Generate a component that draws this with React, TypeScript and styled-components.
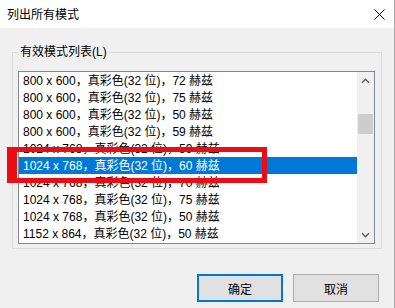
import React from "react";
import styled, { createGlobalStyle } from "styled-components";

const Global = createGlobalStyle`
  html, body { margin: 0; padding: 0; background: #f0f0f0; }
  body { font-family: "Liberation Sans", "Noto Sans CJK SC", sans-serif; }
  * { box-sizing: border-box; }
`;

const Window = styled.div`
  position: relative;
  width: 395px;
  height: 308px;
  background: #f0f0f0;
  border-right: 1px solid #a8a8a8;
  display: flex;
  flex-direction: column;
  font-size: 12px;
  color: #000;
  overflow: hidden;
`;

const TitleBar = styled.div`
  flex: none;
  height: 28px;
  background: #fff;
  display: flex;
  align-items: center;
  justify-content: space-between;
  padding-left: 7px;
`;

const Title = styled.span`
  font-size: 12px;
  line-height: 16px;
  padding-top: 1px;
`;

const CloseButton = styled.div`
  width: 30px;
  height: 28px;
  display: flex;
  align-items: center;
  justify-content: center;
`;

const Client = styled.div`
  display: flex;
  flex-direction: column;
  padding: 16px 0 0 12px;
`;

const GroupBox = styled.fieldset`
  width: 370px;
  margin: 0;
  min-width: 0;
  padding: 11px 6px 4px 5px;
  border: 1px solid #dcdcdc;
`;

const Legend = styled.legend`
  padding: 0 2px;
  font-size: 12px;
  line-height: 16px;
`;

const ListBox = styled.div`
  height: 173px;
  border: 1px solid #828790;
  background: #fff;
  display: flex;
`;

const List = styled.div`
  flex: 1;
  min-width: 0;
  overflow: hidden;
  display: flex;
  flex-direction: column;
`;

const Row = styled.div<{ $selected?: boolean }>`
  flex: none;
  height: 17px;
  line-height: 15px;
  padding: 2px 0 0 4px;
  white-space: nowrap;
  overflow: hidden;
  background: ${(p) => (p.$selected ? "#0078d7" : "transparent")};
  color: ${(p) => (p.$selected ? "#fff" : "#000")};
`;

const ScrollBar = styled.div`
  flex: none;
  width: 17px;
  background: #f0f0f0;
  display: flex;
  flex-direction: column;
`;

const ScrollArrow = styled.div`
  flex: none;
  height: 17px;
  display: flex;
  align-items: center;
  justify-content: center;
`;

const Track = styled.div`
  flex: 1;
  display: flex;
  flex-direction: column;
`;

const Thumb = styled.div`
  height: 20px;
  margin: 25px 1px 0 1px;
  background: #cdcdcd;
`;

const ButtonRow = styled.div`
  display: flex;
  justify-content: flex-end;
  gap: 10px;
  margin-top: 25px;
  padding-right: 15px;
`;

const Button = styled.div<{ $default?: boolean }>`
  width: 86px;
  height: 28px;
  display: flex;
  align-items: center;
  justify-content: center;
  background: #e1e1e1;
  border: ${(p) => (p.$default ? "2px solid #0078d7" : "1px solid #adadad")};
  font-size: 12px;
`;

const Highlight = styled.div`
  position: absolute;
  left: 7px;
  top: 147px;
  width: 260px;
  height: 36px;
  border: 5px solid #ec0c14;
  border-left-width: 10px;
  pointer-events: none;
`;

const rows = [
  "800 x 600，真彩色(32 位)，72 赫兹",
  "800 x 600，真彩色(32 位)，75 赫兹",
  "800 x 600，真彩色(32 位)，50 赫兹",
  "800 x 600，真彩色(32 位)，59 赫兹",
  "1024 x 768，真彩色(32 位)，59 赫兹",
  "1024 x 768，真彩色(32 位)，60 赫兹",
  "1024 x 768，真彩色(32 位)，70 赫兹",
  "1024 x 768，真彩色(32 位)，75 赫兹",
  "1024 x 768，真彩色(32 位)，50 赫兹",
  "1152 x 864，真彩色(32 位)，50 赫兹",
];

const Chevron = ({ down }: { down?: boolean }) => (
  <svg width="9" height="6" viewBox="0 0 9 6">
    <path
      d={down ? "M1 1.2 L4.5 4.7 L8 1.2" : "M1 4.8 L4.5 1.3 L8 4.8"}
      fill="none"
      stroke="#606060"
      strokeWidth="1.5"
    />
  </svg>
);

export default function App() {
  return (
    <>
      <Global />
      <Window>
        <TitleBar>
          <Title>列出所有模式</Title>
          <CloseButton>
            <svg width="11" height="11" viewBox="0 0 11 11">
              <path d="M0.5 0.5 L10.5 10.5 M10.5 0.5 L0.5 10.5" stroke="#000" strokeWidth="1" fill="none" />
            </svg>
          </CloseButton>
        </TitleBar>
        <Client>
          <GroupBox>
            <Legend>有效模式列表(L)</Legend>
            <ListBox>
              <List>
                {rows.map((r, i) => (
                  <Row key={i} $selected={i === 5}>
                    {r}
                  </Row>
                ))}
              </List>
              <ScrollBar>
                <ScrollArrow>
                  <Chevron />
                </ScrollArrow>
                <Track>
                  <Thumb />
                </Track>
                <ScrollArrow>
                  <Chevron down />
                </ScrollArrow>
              </ScrollBar>
            </ListBox>
          </GroupBox>
          <ButtonRow>
            <Button $default>确定</Button>
            <Button>取消</Button>
          </ButtonRow>
        </Client>
        <Highlight />
      </Window>
    </>
  );
}
